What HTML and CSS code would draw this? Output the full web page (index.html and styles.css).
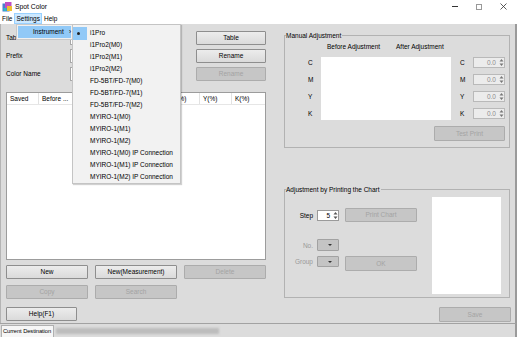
FILE: index.html
```
<!DOCTYPE html>
<html lang="en">
<head>
    <meta charset="UTF-8">
    <title>Spot Color</title>
    <link rel="stylesheet" href="styles.css">
</head>
<body>
    <div class="window">
        <div class="titlebar">
            <svg class="appicon" width="10" height="10" viewBox="0 0 10 10">
                <rect x="0.5" y="1.5" width="7" height="8" fill="#4a7fd0"/>
                <rect x="3" y="0" width="6.5" height="6" fill="#c04fc0"/>
                <rect x="5" y="4" width="5" height="5" fill="#f0c030"/>
                <rect x="1.5" y="6" width="3" height="3" fill="#2fb8c8"/>
            </svg>
            <span class="wintitle">Spot Color</span>
            <div class="winctrls">
                <span class="wc-min"></span>
                <span class="wc-max"></span>
                <svg class="wc-close" width="7" height="7" viewBox="0 0 7 7"><path d="M0.5 0.5L6.5 6.5M6.5 0.5L0.5 6.5" stroke="#333" stroke-width="0.8"/></svg>
            </div>
        </div>
        <div class="menubar">
            <span class="menuitem">File</span>
            <span class="menuitem open">Settings</span>
            <span class="menuitem">Help</span>
        </div>

        <div class="content">
            <div class="leftcol">
                <div class="form">
                    <span class="lbl">Table Name</span>
                    <div class="field"></div>
                    <button class="btn">Table</button>
                    <span class="lbl">Prefix</span>
                    <div class="field"></div>
                    <button class="btn">Rename</button>
                    <span class="lbl">Color Name</span>
                    <div class="field"></div>
                    <button class="btn" disabled>Rename</button>
                </div>

                <div class="list">
                    <div class="listhead">
                        <span class="col c-saved">Saved</span>
                        <span class="col c-before">Before ...</span>
                        <span class="col c-after">After ...</span>
                        <span class="col c-name">Name</span>
                        <span class="col c-pct">C(%)</span>
                        <span class="col c-pct">M(%)</span>
                        <span class="col c-pct">Y(%)</span>
                        <span class="col c-last">K(%)</span>
                    </div>
                </div>

                <div class="btnrow first">
                    <button class="btn wide">New</button>
                    <button class="btn wide">New(Measurement)</button>
                    <button class="btn wide" disabled>Delete</button>
                </div>
                <div class="btnrow">
                    <button class="btn wide" disabled>Copy</button>
                    <button class="btn wide" disabled>Search</button>
                </div>
                <div class="btnrow last">
                    <button class="btn help">Help(F1)</button>
                </div>
            </div>

            <div class="rightcol">
                <div class="group manual">
                    <span class="gtitle">Manual Adjustment</span>
                    <div class="mhead">
                        <span class="mh-before">Before Adjustment</span>
                        <span>After Adjustment</span>
                    </div>
                    <div class="mgrid">
                        <span class="ml r1">C</span>
                        <span class="ml r2">M</span>
                        <span class="ml r3">Y</span>
                        <span class="ml r4">K</span>
                        <div class="swatch"></div>
                        <span class="mr r1">C</span>
                        <span class="mr r2">M</span>
                        <span class="mr r3">Y</span>
                        <span class="mr r4">K</span>
                        <div class="spin off r1"><span class="val">0.0</span><span class="arrows"><svg width="5" height="9" viewBox="0 0 5 9"><path d="M2.5 1L4.5 3.5H0.5Z M2.5 8L4.5 5.5H0.5Z" fill="#777"/></svg></span></div>
                        <div class="spin off r2"><span class="val">0.0</span><span class="arrows"><svg width="5" height="9" viewBox="0 0 5 9"><path d="M2.5 1L4.5 3.5H0.5Z M2.5 8L4.5 5.5H0.5Z" fill="#777"/></svg></span></div>
                        <div class="spin off r3"><span class="val">0.0</span><span class="arrows"><svg width="5" height="9" viewBox="0 0 5 9"><path d="M2.5 1L4.5 3.5H0.5Z M2.5 8L4.5 5.5H0.5Z" fill="#777"/></svg></span></div>
                        <div class="spin off r4"><span class="val">0.0</span><span class="arrows"><svg width="5" height="9" viewBox="0 0 5 9"><path d="M2.5 1L4.5 3.5H0.5Z M2.5 8L4.5 5.5H0.5Z" fill="#777"/></svg></span></div>
                    </div>
                    <button class="btn testprint" disabled>Test Print</button>
                </div>

                <div class="group chart">
                    <span class="gtitle">Adjustment by Printing the Chart</span>
                    <div class="cbody">
                        <div class="cleft">
                            <div class="crow step">
                                <span class="clbl">Step</span>
                                <div class="spin small"><span class="val">5</span><span class="arrows"><svg width="5" height="9" viewBox="0 0 5 9"><path d="M2.5 1L4.5 3.5H0.5Z M2.5 8L4.5 5.5H0.5Z" fill="#555"/></svg></span></div>
                                <button class="btn cbtn" disabled>Print Chart</button>
                            </div>
                            <div class="crow no">
                                <span class="clbl dim">No.</span>
                                <div class="combo"><span class="caret"></span></div>
                            </div>
                            <div class="crow grp">
                                <span class="clbl dim">Group</span>
                                <div class="combo"><span class="caret"></span></div>
                                <button class="btn cbtn okbtn" disabled>OK</button>
                            </div>
                        </div>
                        <div class="preview"></div>
                    </div>
                </div>

                <button class="btn save" disabled>Save</button>
            </div>
        </div>

        <div class="statusbar">
            <span class="dest">Current Destination</span>
            <span class="blurred"></span>
        </div>

        <!-- open Settings menu -->
        <div class="dropdown">
            <div class="ddItem">Instrument<span class="sub">&rsaquo;</span></div>
        </div>
        <div class="submenu">
            <div class="smItem"><span class="check"><span class="dot"></span></span>i1Pro</div>
            <div class="smItem"><span class="check"></span>i1Pro2(M0)</div>
            <div class="smItem"><span class="check"></span>i1Pro2(M1)</div>
            <div class="smItem"><span class="check"></span>i1Pro2(M2)</div>
            <div class="smItem"><span class="check"></span>FD-5BT/FD-7(M0)</div>
            <div class="smItem"><span class="check"></span>FD-5BT/FD-7(M1)</div>
            <div class="smItem"><span class="check"></span>FD-5BT/FD-7(M2)</div>
            <div class="smItem"><span class="check"></span>MYIRO-1(M0)</div>
            <div class="smItem"><span class="check"></span>MYIRO-1(M1)</div>
            <div class="smItem"><span class="check"></span>MYIRO-1(M2)</div>
            <div class="smItem"><span class="check"></span>MYIRO-1(M0) IP Connection</div>
            <div class="smItem"><span class="check"></span>MYIRO-1(M1) IP Connection</div>
            <div class="smItem"><span class="check"></span>MYIRO-1(M2) IP Connection</div>
        </div>
    </div>
</body>
</html>
```
FILE: styles.css
```
* {
    box-sizing: border-box;
}

body {
    margin: 0;
    font-family: "Liberation Sans", Arial, sans-serif;
    font-size: 6.5px;
    color: #000;
    background: #fff;
}

.window {
    position: relative;
    width: 517px;
    height: 337px;
    overflow: hidden;
    background: #dcdcdc;
}

/* ---------- title + menu ---------- */

.titlebar {
    height: 13px;
    background: #fff;
    display: flex;
    align-items: center;
    padding-left: 2px;
}

.appicon {
    display: block;
}

.wintitle {
    margin-left: 3px;
    font-size: 6.8px;
}

.winctrls {
    margin-left: auto;
    display: flex;
    align-items: center;
    height: 13px;
}

.wc-min {
    width: 6px;
    height: 1px;
    background: #333;
    margin-right: 18px;
}

.wc-max {
    width: 6px;
    height: 6px;
    border: 1px solid #999;
    margin-right: 18px;
}

.wc-close {
    display: block;
    margin-right: 10px;
}

.menubar {
    height: 11px;
    background: #fff;
    display: flex;
    align-items: stretch;
}

.menuitem {
    padding: 0 1px;
    border: 1px solid transparent;
    line-height: 9px;
}

.menuitem.open {
    background: #cce8ff;
    border-color: #99d1ff;
}

/* ---------- content ---------- */

.content {
    height: 299px;
    display: flex;
    padding: 7px 0 0 5px;
    border-left: 1px solid #b4b4b4;
    border-right: 2px solid #9a9a9a;
}

.leftcol {
    width: 260px;
}

.form {
    display: grid;
    grid-template-columns: 64px 126px 70px;
    grid-auto-rows: 14px;
    row-gap: 4px;
}

.lbl {
    line-height: 14px;
}

.field {
    width: 108px;
    background: #fff;
    border: 1px solid #a8a8a8;
}

.btn {
    font-family: inherit;
    font-size: 6.5px;
    color: #000;
    height: 14px;
    padding: 0;
    border: 1px solid #8e8e8e;
    border-radius: 1px;
    background: linear-gradient(#ececec, #dadada);
    line-height: 12px;
}

.btn:disabled {
    color: #a3a3a3;
    border-color: #acacac;
    background: #c6c6c6;
}

.list {
    margin-top: 11px;
    height: 168px;
    background: #fff;
    border: 1px solid #9c9c9c;
}

.listhead {
    display: flex;
    height: 12px;
    border-bottom: 1px solid #e6e6e6;
}

.col {
    line-height: 11px;
    padding-left: 3px;
    border-right: 1px solid #e2e2e2;
    white-space: nowrap;
    overflow: hidden;
}

.c-saved { width: 32px; }
.c-before { width: 34px; }
.c-after { width: 34px; }
.c-name { width: 29px; }
.c-pct { width: 32px; }
.c-last { flex: 1; border-right: 0; }

.btnrow {
    display: flex;
    gap: 7px;
    margin-top: 6px;
}

.btnrow.first {
    margin-top: 5px;
}

.btnrow.last {
    margin-top: 8px;
}

.btn.wide {
    width: 82px;
}

.btn.help {
    width: 71px;
}

/* ---------- right side ---------- */

.rightcol {
    margin-left: 18px;
    width: 227px;
    display: flex;
    flex-direction: column;
}

.group {
    width: 226px;
    border: 1px solid #b2b2b2;
}

.gtitle {
    display: block;
    width: fit-content;
    margin: -5px 0 0 1px;
    padding: 0 1px 0 0;
    line-height: 9px;
    background: #dcdcdc;
}

.manual {
    margin-top: 4px;
    height: 113px;
    display: flex;
    flex-direction: column;
}

.mhead {
    margin-top: 2px;
    padding-left: 42px;
    line-height: 9px;
    display: flex;
}

.mh-before {
    width: 69px;
}

.mgrid {
    margin-top: 6px;
    display: grid;
    grid-template-columns: 23px 13px 130px 9px 13px 32px;
    grid-template-rows: repeat(4, 11px);
    row-gap: 6px;
}

.ml { grid-column: 2; line-height: 11px; }
.mr { grid-column: 5; line-height: 11px; }
.r1 { grid-row: 1; }
.r2 { grid-row: 2; }
.r3 { grid-row: 3; }
.r4 { grid-row: 4; }

.swatch {
    grid-column: 3;
    grid-row: 1 / 5;
    background: #fff;
    margin-bottom: -1px;
}

.spin {
    display: flex;
    align-items: center;
    height: 11px;
    background: #fff;
    border: 1px solid #9a9a9a;
}

.spin.off {
    grid-column: 6;
    background: #ececec;
    border-color: #b9b9b9;
    color: #8c8c8c;
}

.spin .val {
    flex: 1;
    text-align: right;
    padding-right: 2px;
    line-height: 9px;
}

.arrows {
    width: 6px;
    height: 9px;
    display: flex;
    justify-content: center;
}

.arrows svg {
    display: block;
}

.testprint {
    width: 71px;
    height: 15px;
    align-self: flex-end;
    margin: 7px 4px 0 0;
}

.chart {
    margin-top: 41px;
    height: 109px;
}

.cbody {
    display: flex;
}

.cleft {
    width: 147px;
}

.crow {
    display: flex;
    align-items: center;
    height: 14px;
}

.crow.step {
    margin-top: 14px;
}

.crow.no {
    margin-top: 17px;
    height: 12px;
}

.crow.grp {
    margin-top: 5px;
    height: 15px;
    align-items: flex-start;
}

.clbl {
    width: 28px;
    text-align: right;
    margin-right: 4px;
    line-height: 11px;
}

.clbl.dim {
    color: #9a9a9a;
}

.spin.small {
    width: 22px;
}

.combo {
    width: 22px;
    height: 12px;
    background: #c4c4c4;
    border: 1px solid #a2a2a2;
    border-radius: 1px;
    display: flex;
    align-items: center;
    justify-content: flex-end;
    padding-right: 6px;
}

.grp .combo {
    height: 11px;
}

.caret {
    width: 0;
    height: 0;
    border-left: 2px solid transparent;
    border-right: 2px solid transparent;
    border-top: 2.5px solid #333;
}

.cbtn {
    width: 72px;
    margin-left: 6px;
}

.okbtn {
    height: 15px;
}

.preview {
    width: 69px;
    height: 97px;
    margin-top: 3px;
    background: #fff;
}

.save {
    width: 72px;
    height: 15px;
    align-self: flex-end;
    margin-top: 9px;
}

/* ---------- status bar ---------- */

.statusbar {
    height: 14px;
    border-top: 1px solid #a2a2a2;
    border-right: 2px solid #9a9a9a;
    display: flex;
    align-items: center;
    padding-left: 1px;
}

.dest {
    height: 12px;
    line-height: 10px;
    padding: 0 2px 0 1px;
    font-size: 5.8px;
    letter-spacing: -0.1px;
    background: #f6f6f6;
    border: 1px solid #b0b0b0;
    border-bottom: 0;
    align-self: flex-end;
}

.blurred {
    width: 163px;
    height: 6px;
    margin-left: 2px;
    background: #bdbdbd;
    filter: blur(1.2px);
}

/* ---------- open menu ---------- */

.dropdown {
    position: absolute;
    left: 16px;
    top: 24px;
    width: 57px;
    height: 16px;
    padding: 1px;
    background: #f0f0f0;
    border: 1px solid #c9c9c9;
}

.ddItem {
    height: 12px;
    line-height: 12px;
    padding-left: 15px;
    background: #91c9f7;
    position: relative;
}

.sub {
    position: absolute;
    left: 51px;
    top: 0;
}

.submenu {
    position: absolute;
    left: 72px;
    top: 24px;
    width: 109px;
    height: 160px;
    padding: 1px 0 0 0;
    background: #f2f2f2;
    border: 1px solid #c4c4c4;
    box-shadow: 1px 1px 1px rgba(0, 0, 0, 0.18);
}

.smItem {
    height: 12px;
    line-height: 12px;
    display: flex;
    align-items: center;
    white-space: nowrap;
}

.smItem:first-child {
    margin-top: 1px;
}

.check {
    width: 14px;
    height: 12px;
    margin-right: 3px;
    display: flex;
    align-items: center;
    justify-content: center;
}

.smItem:first-child .check {
    background: #91c9f7;
    height: 13px;
}

.dot {
    width: 3px;
    height: 3px;
    border-radius: 50%;
    background: #222;
    margin-left: -3px;
}
```
